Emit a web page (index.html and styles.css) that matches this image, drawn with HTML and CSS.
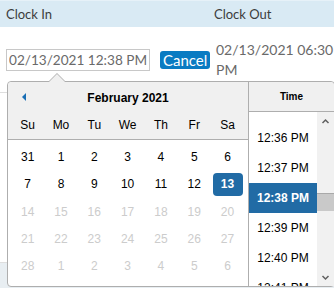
FILE: index.html
```html
<!DOCTYPE html>
<html lang="en">
<head>
    <meta charset="UTF-8">
    <meta name="viewport" content="width=device-width, initial-scale=1.0">
    <title>Timesheet | Clock</title>
    <link rel="stylesheet" href="styles.css">
</head>
<body>
    <div class="sheet">
        <div class="sheet-head">
            <div class="col-in">Clock In</div>
            <div class="col-out">Clock Out</div>
        </div>
        <div class="sheet-row">
            <div class="col-in">
                <input type="text" class="date-input" value="02/13/2021 12:38 PM">
                <button class="cancel-btn">Cancel</button>
            </div>
            <div class="col-out out-text">02/13/2021 06:30 PM</div>
        </div>
        <div class="sheet-row blank"></div>
        <div class="sheet-row alt"></div>

        <div class="picker">
            <div class="picker-arrow"></div>
            <div class="calendar">
                <div class="cal-header">
                    <span class="nav-prev"></span>
                    <div class="cal-title">February 2021</div>
                    <div class="week day-names">
                        <div class="day-name">Su</div>
                        <div class="day-name">Mo</div>
                        <div class="day-name">Tu</div>
                        <div class="day-name">We</div>
                        <div class="day-name">Th</div>
                        <div class="day-name">Fr</div>
                        <div class="day-name">Sa</div>
                    </div>
                </div>
                <div class="month">
                    <div class="week">
                        <div class="day">31</div><div class="day">1</div><div class="day">2</div><div class="day">3</div><div class="day">4</div><div class="day">5</div><div class="day">6</div>
                    </div>
                    <div class="week">
                        <div class="day">7</div><div class="day">8</div><div class="day">9</div><div class="day">10</div><div class="day">11</div><div class="day">12</div><div class="day selected">13</div>
                    </div>
                    <div class="week">
                        <div class="day off">14</div><div class="day off">15</div><div class="day off">16</div><div class="day off">17</div><div class="day off">18</div><div class="day off">19</div><div class="day off">20</div>
                    </div>
                    <div class="week">
                        <div class="day off">21</div><div class="day off">22</div><div class="day off">23</div><div class="day off">24</div><div class="day off">25</div><div class="day off">26</div><div class="day off">27</div>
                    </div>
                    <div class="week">
                        <div class="day off">28</div><div class="day off">1</div><div class="day off">2</div><div class="day off">3</div><div class="day off">4</div><div class="day off">5</div><div class="day off">6</div>
                    </div>
                </div>
            </div>
            <div class="time">
                <div class="time-header">Time</div>
                <div class="time-body">
                    <ul class="time-list">
                        <li>12:36 PM</li>
                        <li>12:37 PM</li>
                        <li class="selected">12:38 PM</li>
                        <li>12:39 PM</li>
                        <li>12:40 PM</li>
                        <li>12:41 PM</li>
                    </ul>
                    <div class="scrollbar">
                        <svg class="scroll-arrow" width="17" height="17" viewBox="0 0 17 17"><polyline points="5.5,10 8.5,7 11.5,10" fill="none" stroke="#606060" stroke-width="1.5"/></svg>
                        <div class="scroll-thumb"></div>
                        <svg class="scroll-arrow bottom" width="17" height="17" viewBox="0 0 17 17"><polyline points="5.5,7 8.5,10 11.5,7" fill="none" stroke="#606060" stroke-width="1.5"/></svg>
                    </div>
                </div>
            </div>
        </div>
    </div>
</body>
</html>
```

FILE: styles.css
```css
body {
    margin: 0;
    padding: 0;
    font-family: Lato, "Open Sans", sans-serif;
    overflow: hidden;
    background: #fff;
}

.sheet {
    position: relative;
    width: 334px;
    height: 288px;
    overflow: hidden;
}

.sheet-head {
    display: flex;
    align-items: center;
    height: 27px;
    background: #d9eaf4;
    border-top: 1px solid #e6f1f8;
    box-sizing: border-box;
    color: #3c3c3c;
    font-size: 13px;
}

.col-in {
    box-sizing: border-box;
    width: 214px;
    padding-left: 6px;
    display: flex;
    align-items: center;
    flex: none;
}

.sheet-row {
    display: flex;
    align-items: center;
    height: 65px;
    border-bottom: 1px solid #dedede;
}

.date-input {
    flex: none;
    box-sizing: border-box;
    width: 144px;
    height: 22px;
    margin: 0;
    padding: 0 1px 0 2px;
    border: 1px solid #c8c8c8;
    font-family: Lato, sans-serif;
    font-size: 13.6px;
    color: #6a6a6a;
}

.cancel-btn {
    flex: none;
    margin-left: 10px;
    height: 18px;
    padding: 0 3px;
    border: none;
    border-radius: 3px;
    background: #0a7bc2;
    color: #fff;
    font-family: Lato, sans-serif;
    font-size: 15px;
    line-height: 18px;
}

.out-text {
    width: 118px;
    padding-left: 2px;
    font-size: 14px;
    line-height: 20px;
    color: #6a6a6a;
}

.sheet-row.blank {
    height: 169px;
}

.sheet-row.alt {
    height: 40px;
    background: #e8eef2;
    border-bottom: none;
}

/* date picker popup */
.picker {
    position: absolute;
    left: 7px;
    top: 81px;
    display: flex;
    background: #fff;
    border: 1px solid #aeaeae;
    border-radius: 4px;
    font-family: "Liberation Sans", Arial, sans-serif;
    font-size: 12px;
    color: #000;
}

.picker-arrow {
    position: absolute;
    top: -9px;
    left: 41px;
    width: 0;
    height: 0;
    border-left: 8px solid transparent;
    border-right: 8px solid transparent;
    border-bottom: 8px solid #aeaeae;
}

.picker-arrow::after {
    content: "";
    position: absolute;
    top: 1px;
    left: -8px;
    border-left: 8px solid transparent;
    border-right: 8px solid transparent;
    border-bottom: 8px solid #f0f0f0;
}

.calendar {
    width: 240px;
}

.cal-header {
    position: relative;
    background: #f0f0f0;
    border-bottom: 1px solid #aeaeae;
    border-top-left-radius: 4px;
    padding: 8px 3px 0;
}

.nav-prev {
    position: absolute;
    left: 14px;
    top: 11px;
    width: 0;
    height: 0;
    border-top: 4px solid transparent;
    border-bottom: 4px solid transparent;
    border-right: 4px solid #1a6fb5;
}

.cal-title {
    text-align: center;
    font-weight: bold;
    line-height: 16px;
    margin-bottom: 6px;
}

.week {
    display: flex;
}

.day-name {
    width: 30px;
    margin: 0 1.667px;
    line-height: 27px;
    text-align: center;
}

.month {
    padding: 4px 3px;
}

.day {
    width: 30px;
    height: 23px;
    margin: 2.125px 1.667px;
    line-height: 23px;
    text-align: center;
    border-radius: 4px;
}

.day.off {
    color: #cccccc;
}

.day.selected {
    background: #216ba5;
    color: #fff;
    font-weight: bold;
}

.time {
    width: 85px;
    border-left: 1px solid #aeaeae;
}

.time-header {
    height: 29px;
    line-height: 29px;
    background: #f0f0f0;
    border-bottom: 1px solid #aeaeae;
    border-top-right-radius: 4px;
    text-align: center;
    font-weight: bold;
    font-size: 10px;
}

.time-body {
    display: flex;
    height: 174px;
    overflow: hidden;
}

.time-list {
    width: 68px;
    margin: 0;
    padding: 11px 0 0;
    list-style: none;
}

.time-list li {
    height: 30px;
    line-height: 30px;
    text-align: center;
    white-space: nowrap;
}

.time-list li.selected {
    background: #216ba5;
    color: #fff;
    font-weight: bold;
}

.scrollbar {
    position: relative;
    width: 17px;
    background: #f1f1f1;
}

.scroll-arrow {
    display: block;
    position: absolute;
    left: 0;
    top: 1px;
}

.scroll-arrow.bottom {
    top: 157px;
}

.scroll-thumb {
    position: absolute;
    left: 0;
    top: 81px;
    width: 17px;
    height: 17px;
    background: #c9c9c9;
    border-top: 1px solid #a9a9a9;
}
```
